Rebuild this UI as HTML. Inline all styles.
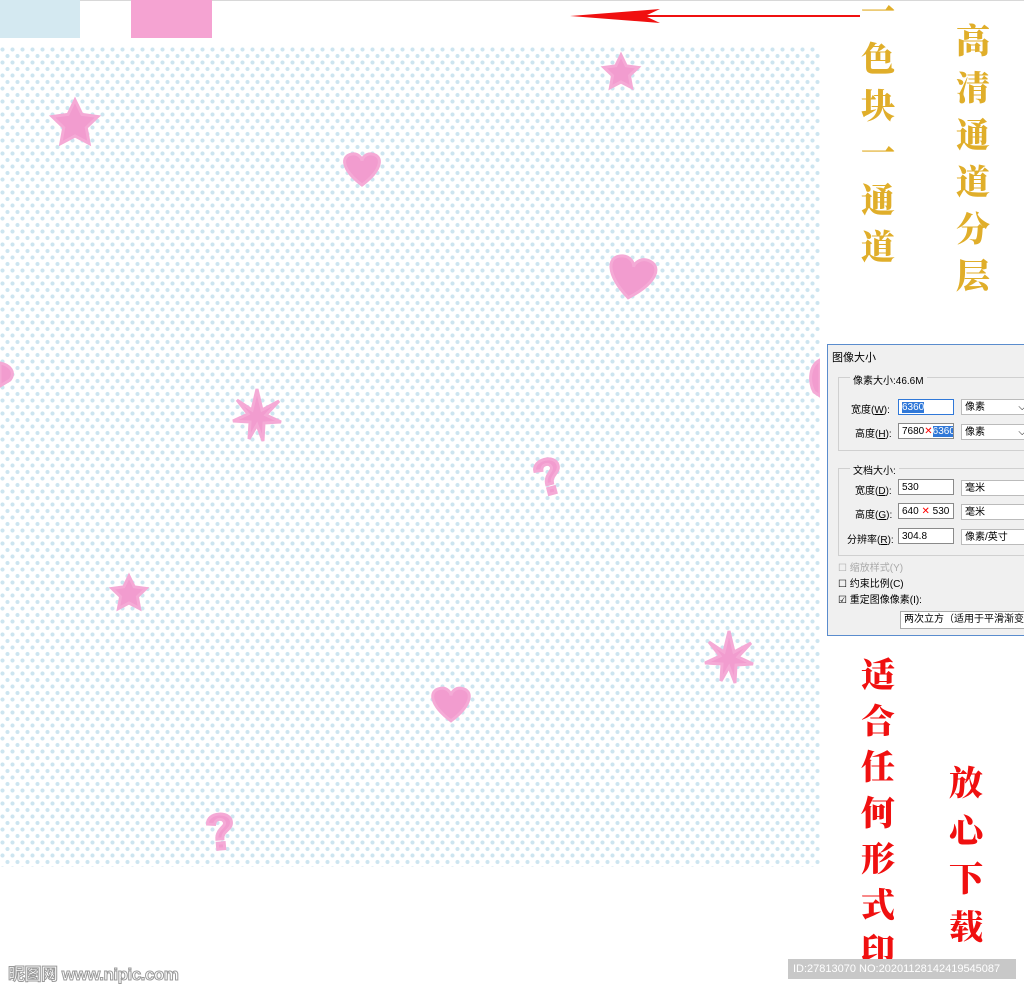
<!DOCTYPE html>
<html><head><meta charset="utf-8"><style>
html,body{margin:0;padding:0;width:1024px;height:989px;background:#fff;overflow:hidden;position:relative;font-family:"Liberation Sans","Noto Sans CJK SC",sans-serif}
.topline{position:absolute;left:0;top:0;width:1024px;height:1px;background:#d8d8d8}
.pat{position:absolute;left:0;top:47px;width:820px;height:820px;
background-image:radial-gradient(circle at 2.5px 2.5px,#cde5f0 1.8px,transparent 2.3px),radial-gradient(circle at 2.5px 2.5px,#cde5f0 1.8px,transparent 2.3px);
background-size:10px 13px,10px 13px;background-position:0 0,5px 6.5px}
.v{position:absolute;font-family:"Noto Serif CJK SC",serif;font-weight:900;width:40px;text-align:center}
.v div{height:var(--h)}
.gold{color:#e0ae2a;font-size:34px;}
.red{color:#f01010;font-size:34px;}
.dlg{position:absolute;left:827px;top:344px;width:197px;height:290px;background:#f0f0f0;border:1px solid #5a8ccd;border-right:none;font-size:10px;color:#000}
.dlg .t{position:absolute;left:4px;top:4px;font-size:11px}
.g{position:absolute;border:1px solid #d0d0d0}
.lb{position:absolute;font-size:10px}
.in{position:absolute;background:#fff;border:1px solid #8a8a8a;height:16px;font-size:10px;line-height:16px;padding-left:3px;box-sizing:border-box;white-space:nowrap;overflow:hidden}
.sel{background:#3078d8;color:#fff}
.wm{position:absolute;left:788px;top:959px;width:228px;height:20px;background:#c8c8c8;color:#fff;font-size:11px;line-height:20px;padding-left:5px;box-sizing:border-box}
</style></head><body>
<div class="topline"></div>
<div style="position:absolute;left:0;top:0;width:80px;height:38px;background:#d4e9f1"></div>
<div style="position:absolute;left:131px;top:0;width:81px;height:38px;background:#f5a3d2"></div>
<svg style="position:absolute;left:565px;top:5px" width="300" height="22"><path d="M5 11 L95 4 L80 11 L95 18 Z" fill="#f01010"/><line x1="20" y1="11" x2="295" y2="11" stroke="#f01010" stroke-width="2"/></svg>
<div class="pat"></div>
<svg style="position:absolute;left:0;top:0" width="820" height="870">
<g fill="#f29ccf" stroke="#f5aad6" stroke-width="3">
<polygon vector-effect="non-scaling-stroke" transform="translate(75,124) scale(24)" points="0,-1 0.29,-0.4 0.95,-0.31 0.47,0.15 0.59,0.81 0,0.5 -0.59,0.81 -0.47,0.15 -0.95,-0.31 -0.29,-0.4"/>
<polygon vector-effect="non-scaling-stroke" transform="translate(621,73) scale(18)" points="0,-1 0.29,-0.4 0.95,-0.31 0.47,0.15 0.59,0.81 0,0.5 -0.59,0.81 -0.47,0.15 -0.95,-0.31 -0.29,-0.4"/>
<polygon vector-effect="non-scaling-stroke" transform="translate(129,594) scale(18)" points="0,-1 0.29,-0.4 0.95,-0.31 0.47,0.15 0.59,0.81 0,0.5 -0.59,0.81 -0.47,0.15 -0.95,-0.31 -0.29,-0.4"/>
<path d="M362 185 C342 170 340 156 352 154 C358 153 362 158 362 161 C362 158 366 153 372 154 C384 156 382 170 362 185Z"/>
<path transform="translate(632,276) rotate(10) scale(1.3)" vector-effect="non-scaling-stroke" d="M0 17 C-20 2 -22 -12 -10 -14 C-4 -15 0 -10 0 -7 C0 -10 4 -15 10 -14 C22 -12 20 2 0 17Z"/>
<path transform="translate(451,703) scale(1.05)" vector-effect="non-scaling-stroke" d="M0 17 C-20 2 -22 -12 -10 -14 C-4 -15 0 -10 0 -7 C0 -10 4 -15 10 -14 C22 -12 20 2 0 17Z"/>
<path transform="translate(257,417)" d="M0 -28 L5 -7 L22 -16 L9 -2 L24 5 L7 6 L6 24 L0 8 L-8 22 L-7 5 L-24 4 L-9 -3 L-20 -17 L-5 -7Z"/>
<path transform="translate(729,659)" d="M0 -28 L5 -7 L22 -16 L9 -2 L24 5 L7 6 L6 24 L0 8 L-8 22 L-7 5 L-24 4 L-9 -3 L-20 -17 L-5 -7Z"/>
<path transform="translate(548,474) rotate(-15)" d="M-12 -6 C-12 -18 12 -18 12 -6 C12 2 2 2 2 10 L-4 10 C-4 0 6 -2 5 -6 C4 -11 -4 -11 -5 -5Z M-4 14 h7 v6 h-7Z"/>
<path transform="translate(220,829) rotate(-5)" d="M-12 -6 C-12 -18 12 -18 12 -6 C12 2 2 2 2 10 L-4 10 C-4 0 6 -2 5 -6 C4 -11 -4 -11 -5 -5Z M-4 14 h7 v6 h-7Z"/>
<path d="M0 363 C10 365 16 372 10 380 L0 386Z"/>
<path d="M820 360 C810 365 808 380 814 392 L820 396Z"/>
</g></svg>
<div class="v gold" style="left:858px;top:-14px;--h:47px;line-height:47px"><div>一</div><div>色</div><div>块</div><div>一</div><div>通</div><div>道</div></div>
<div class="v gold" style="left:953px;top:15px;--h:47px;line-height:47px"><div>高</div><div>清</div><div>通</div><div>道</div><div>分</div><div>层</div></div>
<div class="v red" style="left:858px;top:650px;--h:46px;line-height:46px"><div>适</div><div>合</div><div>任</div><div>何</div><div>形</div><div>式</div><div>印</div></div>
<div class="v red" style="left:946px;top:757px;--h:48px;line-height:48px"><div>放</div><div>心</div><div>下</div><div>载</div></div>
<div class="dlg">
<div class="t">图像大小</div>
<div class="g" style="left:10px;top:32px;width:200px;height:72px"></div>
<div class="lb" style="left:22px;top:27px;background:#f0f0f0;padding:0 3px">像素大小:46.6M</div>
<div class="lb" style="left:23px;top:56px">宽度(<u>W</u>):</div>
<div class="in" style="left:70px;top:54px;width:56px;border-color:#3078d8"><span class="sel">6360</span></div>
<div class="in" style="left:133px;top:54px;width:70px;border-color:#bbb">像素 <span style="float:right;margin-right:4px">⌵</span></div>
<div class="lb" style="left:27px;top:80px">高度(<u>H</u>):</div>
<div class="in" style="left:70px;top:78px;width:56px">7680<span style="color:red">✕</span><span class="sel">6360</span></div>
<div class="in" style="left:133px;top:79px;width:70px;border-color:#bbb">像素 <span style="float:right;margin-right:4px">⌵</span></div>
<div class="g" style="left:10px;top:123px;width:200px;height:86px"></div>
<div class="lb" style="left:22px;top:117px;background:#f0f0f0;padding:0 3px">文档大小:</div>
<div class="lb" style="left:27px;top:137px">宽度(<u>D</u>):</div>
<div class="in" style="left:70px;top:134px;width:56px">530</div>
<div class="in" style="left:133px;top:135px;width:70px;border-color:#bbb">毫米</div>
<div class="lb" style="left:27px;top:161px">高度(<u>G</u>):</div>
<div class="in" style="left:70px;top:158px;width:56px">640 <span style="color:red">✕</span> 530</div>
<div class="in" style="left:133px;top:159px;width:70px;border-color:#bbb">毫米</div>
<div class="lb" style="left:19px;top:186px">分辨率(<u>R</u>):</div>
<div class="in" style="left:70px;top:183px;width:56px">304.8</div>
<div class="in" style="left:133px;top:184px;width:70px;border-color:#bbb">像素/英寸</div>
<div class="lb" style="left:10px;top:214px;color:#aaa">☐ 缩放样式(Y)</div>
<div class="lb" style="left:10px;top:230px">☐ 约束比例(C)</div>
<div class="lb" style="left:10px;top:246px">☑ 重定图像像素(I):</div>
<div class="in" style="left:72px;top:266px;width:130px;height:18px;border-color:#aaa">两次立方（适用于平滑渐变</div>
</div>
<div style="position:absolute;left:8px;top:960px;font-size:17px;color:#fff;-webkit-text-stroke:1px #999;font-weight:bold;letter-spacing:-0.5px">昵图网 www.nipic.com</div>
<div class="wm">ID:27813070 NO:20201128142419545087</div>
</body></html>
